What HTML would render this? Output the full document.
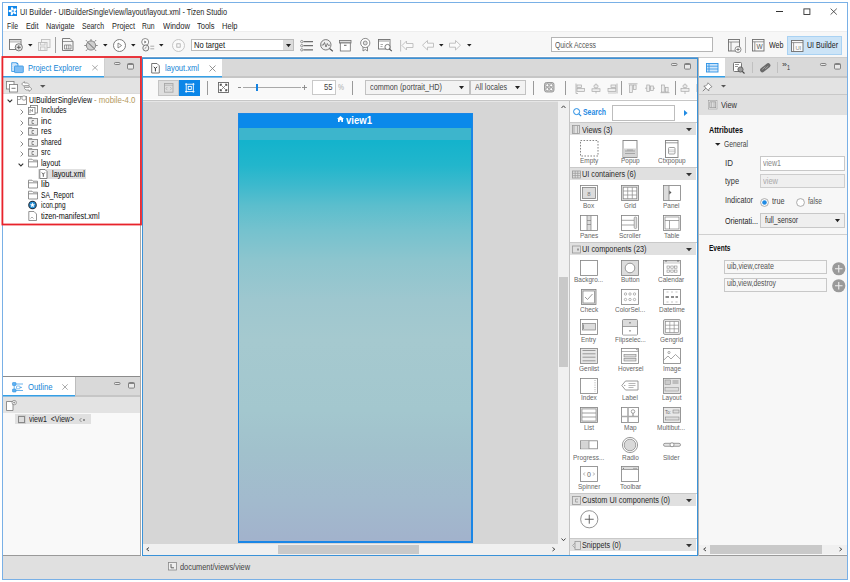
<!DOCTYPE html>
<html><head><meta charset="utf-8"><style>
html,body{margin:0;padding:0;}
body{width:850px;height:582px;position:relative;overflow:hidden;background:#fff;font-family:"Liberation Sans", sans-serif;}
svg{overflow:visible;}
</style></head><body>
<div style="position:absolute;left:0px;top:0px;width:850.00px;height:582.00px;background:#ffffff;"></div>
<div style="position:absolute;left:2px;top:2px;width:846.00px;height:578.00px;box-sizing:border-box;border:1px solid #79b0e6;background:transparent;"></div>
<div style="position:absolute;left:3px;top:31px;width:844.00px;height:26.00px;background:#f7f7f7;"></div>
<div style="position:absolute;left:3px;top:31px;width:844.00px;height:1.00px;background:#eeeeee;"></div>
<div style="position:absolute;left:7.6px;top:6.3px;width:9.40px;height:9.70px;background:#0f86ea;"></div>
<svg style="position:absolute;left:7.6px;top:6.3px;" width="9.4" height="9.7" viewBox="0 0 9.4 9.7"><g transform="translate(4.85 5.15)"><ellipse cx="0" cy="-2.4" rx="1.25" ry="1.9" fill="#fff" transform="rotate(-15)"/><ellipse cx="0" cy="-2.4" rx="1.25" ry="1.9" fill="#fff" transform="rotate(57)"/><ellipse cx="0" cy="-2.4" rx="1.25" ry="1.9" fill="#fff" transform="rotate(129)"/><ellipse cx="0" cy="-2.4" rx="1.25" ry="1.9" fill="#fff" transform="rotate(201)"/><ellipse cx="0" cy="-2.4" rx="1.25" ry="1.9" fill="#fff" transform="rotate(273)"/><circle r="1.1" fill="#5fb0f2"/></g></svg>
<div style="position:absolute;left:20px;top:8.00px;font-size:8.36px;line-height:1;font-weight:normal;color:#262626;white-space:pre;transform:scaleX(0.8723);transform-origin:0 0;">UI Builder - UIBuilderSingleView/layout/layout.xml - Tizen Studio</div>
<div style="position:absolute;left:776px;top:10.6px;width:7.00px;height:0.80px;background:#333;"></div>
<svg style="position:absolute;left:802.5px;top:8px;" width="8" height="7" viewBox="0 0 8 7"><rect x="0.9" y="0.9" width="6" height="5.6" fill="none" stroke="#333" stroke-width="0.9"/></svg>
<svg style="position:absolute;left:829.5px;top:8px;" width="8" height="7" viewBox="0 0 8 7"><path d="M0.6 0.6 L6.8 6.6 M6.8 0.6 L0.6 6.6" stroke="#333" stroke-width="0.8"/></svg>
<div style="position:absolute;left:7px;top:22.00px;font-size:8.58px;line-height:1;font-weight:normal;color:#262626;white-space:pre;transform:scaleX(0.7955);transform-origin:0 0;">File</div>
<div style="position:absolute;left:26px;top:22.00px;font-size:8.58px;line-height:1;font-weight:normal;color:#262626;white-space:pre;transform:scaleX(0.8448);transform-origin:0 0;">Edit</div>
<div style="position:absolute;left:46px;top:22.00px;font-size:8.58px;line-height:1;font-weight:normal;color:#262626;white-space:pre;transform:scaleX(0.8417);transform-origin:0 0;">Navigate</div>
<div style="position:absolute;left:82px;top:22.00px;font-size:8.58px;line-height:1;font-weight:normal;color:#262626;white-space:pre;transform:scaleX(0.8092);transform-origin:0 0;">Search</div>
<div style="position:absolute;left:111.5px;top:22.00px;font-size:8.58px;line-height:1;font-weight:normal;color:#262626;white-space:pre;transform:scaleX(0.8613);transform-origin:0 0;">Project</div>
<div style="position:absolute;left:142px;top:22.00px;font-size:8.58px;line-height:1;font-weight:normal;color:#262626;white-space:pre;transform:scaleX(0.7937);transform-origin:0 0;">Run</div>
<div style="position:absolute;left:162.7px;top:22.00px;font-size:8.58px;line-height:1;font-weight:normal;color:#262626;white-space:pre;transform:scaleX(0.8848);transform-origin:0 0;">Window</div>
<div style="position:absolute;left:196.5px;top:22.00px;font-size:8.58px;line-height:1;font-weight:normal;color:#262626;white-space:pre;transform:scaleX(0.8736);transform-origin:0 0;">Tools</div>
<div style="position:absolute;left:221.5px;top:22.00px;font-size:8.58px;line-height:1;font-weight:normal;color:#262626;white-space:pre;transform:scaleX(0.8779);transform-origin:0 0;">Help</div>
<div style="position:absolute;left:3px;top:57px;width:138.00px;height:19.00px;background:#d9d9d9;"></div>
<div style="position:absolute;left:3px;top:76px;width:138.00px;height:2.00px;background:#c6c6c6;"></div>
<div style="position:absolute;left:3px;top:57px;width:101.00px;height:19.00px;background:#ffffff;"></div>
<div style="position:absolute;left:104px;top:59px;width:1.00px;height:17.00px;background:#cfcfcf;"></div>
<div style="position:absolute;left:3px;top:76px;width:101.00px;height:1.00px;background:#35a0e6;"></div>
<div style="position:absolute;left:3px;top:77px;width:101.00px;height:1.00px;background:#88bde3;"></div>
<div style="position:absolute;left:3px;top:78px;width:138.00px;height:16.00px;background:#e3e3e3;"></div>
<div style="position:absolute;left:3px;top:93px;width:138.00px;height:1.00px;background:#dadada;"></div>
<div style="position:absolute;left:3px;top:94px;width:138.00px;height:282.00px;background:#ffffff;"></div>
<div style="position:absolute;left:3px;top:376px;width:138.00px;height:1.00px;background:#8c8c8c;"></div>
<div style="position:absolute;left:140px;top:57px;width:1.00px;height:499.00px;background:#a9a9a9;"></div>
<div style="position:absolute;left:3px;top:377px;width:137.00px;height:18.00px;background:#d9d9d9;"></div>
<div style="position:absolute;left:3px;top:395px;width:137.00px;height:2.00px;background:#c6c6c6;"></div>
<div style="position:absolute;left:3px;top:377px;width:72.00px;height:18.00px;background:#ffffff;"></div>
<div style="position:absolute;left:75px;top:377px;width:1.00px;height:18.00px;background:#bdbdbd;"></div>
<div style="position:absolute;left:3px;top:395px;width:72.00px;height:1.00px;background:#35a0e6;"></div>
<div style="position:absolute;left:3px;top:396px;width:72.00px;height:1.00px;background:#88bde3;"></div>
<div style="position:absolute;left:3px;top:397px;width:137.00px;height:16.00px;background:#e3e3e3;"></div>
<div style="position:absolute;left:3px;top:413px;width:137.00px;height:142.00px;background:#f9f9f9;"></div>
<div style="position:absolute;left:3px;top:555px;width:138.00px;height:1.00px;background:#9a9a9a;"></div>
<div style="position:absolute;left:142px;top:57px;width:556.00px;height:499.00px;background:#d6d6d6;"></div>
<div style="position:absolute;left:142px;top:56px;width:556.00px;height:1.00px;background:#ffffff;"></div>
<div style="position:absolute;left:142px;top:57px;width:556.00px;height:1.00px;background:#6d9fcc;"></div>
<div style="position:absolute;left:142px;top:58px;width:556.00px;height:497.50px;box-sizing:border-box;border:1px solid #3a92d8;background:transparent;"></div>
<div style="position:absolute;left:143px;top:59px;width:554.00px;height:17.00px;background:#d9d9d9;"></div>
<div style="position:absolute;left:143px;top:76px;width:554.00px;height:2.00px;background:#c6c6c6;"></div>
<div style="position:absolute;left:143px;top:59px;width:79.00px;height:17.00px;background:#ffffff;"></div>
<div style="position:absolute;left:143px;top:76px;width:79.00px;height:1.00px;background:#35a0e6;"></div>
<div style="position:absolute;left:143px;top:77px;width:79.00px;height:1.00px;background:#88bde3;"></div>
<div style="position:absolute;left:143px;top:78px;width:554.00px;height:21.00px;background:#f9f9f9;"></div>
<div style="position:absolute;left:143px;top:99px;width:554.00px;height:1.00px;background:#ffffff;"></div>
<div style="position:absolute;left:143px;top:100px;width:554.00px;height:1.00px;background:#c6c6c6;"></div>
<div style="position:absolute;left:143px;top:101px;width:415.00px;height:1.00px;background:#e6e6e6;"></div>
<div style="position:absolute;left:143px;top:544px;width:426.00px;height:11.00px;background:#f0f0f0;"></div>
<div style="position:absolute;left:278px;top:545px;width:141.00px;height:9.00px;background:#c9c9c9;"></div>
<div style="position:absolute;left:558px;top:101px;width:11.00px;height:454.00px;background:#f0f0f0;"></div>
<div style="position:absolute;left:559px;top:277px;width:9.00px;height:90.00px;background:#c9c9c9;"></div>
<div style="position:absolute;left:569px;top:101px;width:1.00px;height:454.00px;background:#c4c4c4;"></div>
<div style="position:absolute;left:570px;top:101px;width:127.00px;height:454.00px;background:#ffffff;"></div>
<div style="position:absolute;left:698px;top:57px;width:149.00px;height:499.00px;background:#f7f7f7;"></div>
<div style="position:absolute;left:698px;top:57px;width:149.00px;height:1.00px;background:#cccccc;"></div>
<div style="position:absolute;left:698px;top:58px;width:149.00px;height:18.00px;background:#d9d9d9;"></div>
<div style="position:absolute;left:698px;top:76px;width:149.00px;height:2.00px;background:#c6c6c6;"></div>
<div style="position:absolute;left:699px;top:58px;width:26.00px;height:18.00px;background:#ffffff;"></div>
<div style="position:absolute;left:699px;top:76px;width:26.00px;height:1.00px;background:#35a0e6;"></div>
<div style="position:absolute;left:699px;top:77px;width:26.00px;height:1.00px;background:#88bde3;"></div>
<div style="position:absolute;left:698px;top:78px;width:149.00px;height:16.00px;background:#e3e3e3;"></div>
<div style="position:absolute;left:698px;top:94px;width:149.00px;height:1.00px;background:#c8c8c8;"></div>
<div style="position:absolute;left:698px;top:95px;width:149.00px;height:20.00px;background:#e0e0e0;"></div>
<div style="position:absolute;left:698px;top:545px;width:149.00px;height:9.00px;background:#f0f0f0;"></div>
<div style="position:absolute;left:710px;top:545px;width:112.00px;height:9.00px;background:#c9c9c9;"></div>
<div style="position:absolute;left:698px;top:555px;width:149.00px;height:1.00px;background:#9a9a9a;"></div>
<div style="position:absolute;left:698px;top:57px;width:1.00px;height:499.00px;background:#b5b5b5;"></div>
<div style="position:absolute;left:3px;top:556px;width:844.00px;height:23.00px;background:#e0e0e0;"></div>
<div style="position:absolute;left:237.5px;top:112.7px;width:235.10px;height:430.00px;background:#1a86e6;"></div>
<div style="position:absolute;left:239.2px;top:127.5px;width:231.80px;height:413.80px;background:linear-gradient(180deg,#14b3cc 13.5px,#22b6cc 37.5px,#3db9cd 57.5px,#5bbecd 77.5px,#75c2ce 102.5px,#8dc5ce 132.5px,#9ec7cf 172.5px,#a5c9cf 212.5px,#a3c7ce 282.5px,#a1c1cc 322.5px,#a2bacd 372.5px,#a2b2cc 413.8px);"></div>
<div style="position:absolute;left:239.2px;top:127.5px;width:231.80px;height:12.80px;background:#3db5cc;"></div>
<div style="position:absolute;left:238.5px;top:113.5px;width:233.30px;height:14.00px;background:#0a89ea;"></div>
<svg style="position:absolute;left:337px;top:115.6px;" width="7" height="6" viewBox="0 0 7 6"><path d="M3.5 0 L7 3 L6 3 L6 6 L4.3 6 L4.3 4.2 L2.7 4.2 L2.7 6 L1 6 L1 3 L0 3 Z" fill="#fff"/></svg>
<div style="position:absolute;left:345.6px;top:116.00px;font-size:10.34px;line-height:1;font-weight:bold;color:#fff;white-space:pre;transform:scaleX(0.9239);transform-origin:0 0;">view1</div>
<div style="position:absolute;left:165px;top:64.00px;font-size:9.24px;line-height:1;font-weight:normal;color:#1485d6;white-space:pre;transform:scaleX(0.8177);transform-origin:0 0;">layout.xml</div>
<svg style="position:absolute;left:208.5px;top:64.5px;" width="7" height="7" viewBox="0 0 7 7"><path d="M0.5 0.5 L6.5 6.5 M6.5 0.5 L0.5 6.5" stroke="#7a7a7a" stroke-width="0.8"/></svg>
<svg style="position:absolute;left:671px;top:62.5px;" width="6.5" height="3" viewBox="0 0 6.5 3"><rect x="0.5" y="0.5" width="5.5" height="2" rx="0.8" fill="#e8e8e8" stroke="#777" stroke-width="0.9"/></svg>
<svg style="position:absolute;left:684.4px;top:62.8px;" width="7" height="6.5" viewBox="0 0 7 6.5"><rect x="0.5" y="0.5" width="6" height="5.6" rx="1" fill="#e8e8e8" stroke="#777" stroke-width="0.9"/><path d="M0.8 1.4 H6.2" stroke="#777" stroke-width="1"/></svg>
<svg style="position:absolute;left:572.5px;top:107.5px;" width="9" height="9" viewBox="0 0 9 9"><circle cx="3.6" cy="3.6" r="3" fill="none" stroke="#1f8ae3" stroke-width="1"/><path d="M5.8 5.8 L8.2 8.2" stroke="#1f8ae3" stroke-width="1.1"/></svg>
<div style="position:absolute;left:583px;top:108.00px;font-size:8.58px;line-height:1;font-weight:bold;color:#1f8ae3;white-space:pre;transform:scaleX(0.8035);transform-origin:0 0;">Search</div>
<div style="position:absolute;left:612px;top:104.5px;width:63.20px;height:16.00px;box-sizing:border-box;border:1px solid #bdbdbd;background:#fff;"></div>
<svg style="position:absolute;left:684px;top:109.5px;" width="4" height="6" viewBox="0 0 4 6"><path d="M0 0 L3.6 3 L0 6 Z" fill="#1f8ae3"/></svg>
<div style="position:absolute;left:570.2px;top:122.2px;width:127.30px;height:1.00px;background:#c9c9c9;"></div>
<div style="position:absolute;left:570.2px;top:123.2px;width:126.00px;height:12.30px;background:#e0e0e0;"></div>
<svg style="position:absolute;left:572px;top:125.2px;opacity:0.75;" width="9" height="9" viewBox="0 0 9 9"><rect x="0.5" y="0.5" width="7" height="8" fill="none" stroke="#808080" stroke-width="0.8" /><path d="M2 1 V8.5 M5.5 1 V8.5" stroke="#808080" stroke-width="0.7"/></svg>
<div style="position:absolute;left:582.3px;top:126.00px;font-size:8.58px;line-height:1;font-weight:normal;color:#2a2a2a;white-space:pre;transform:scaleX(0.8565);transform-origin:0 0;">Views (3)</div>
<svg style="position:absolute;left:686px;top:128.35px;" width="6" height="3.5" viewBox="0 0 6 3.5"><path d="M0 0 L6 0 L3 3.3 Z" fill="#333"/></svg>
<div style="position:absolute;left:570.2px;top:167.2px;width:127.30px;height:1.00px;background:#c9c9c9;"></div>
<div style="position:absolute;left:570.2px;top:168.2px;width:126.00px;height:12.20px;background:#e0e0e0;"></div>
<svg style="position:absolute;left:572px;top:170.2px;opacity:0.75;" width="9" height="9" viewBox="0 0 9 9"><rect x="0.5" y="1" width="8" height="7" fill="none" stroke="#808080" stroke-width="0.8" /><path d="M0.5 3.3 H8.5 M0.5 5.6 H8.5 M3.2 1 V8 M5.8 1 V8" stroke="#808080" stroke-width="0.7"/></svg>
<div style="position:absolute;left:582.3px;top:170.00px;font-size:8.58px;line-height:1;font-weight:normal;color:#2a2a2a;white-space:pre;transform:scaleX(0.8517);transform-origin:0 0;">UI containers (6)</div>
<svg style="position:absolute;left:686px;top:173.29999999999998px;" width="6" height="3.5" viewBox="0 0 6 3.5"><path d="M0 0 L6 0 L3 3.3 Z" fill="#333"/></svg>
<div style="position:absolute;left:570.2px;top:241.89999999999998px;width:127.30px;height:1.00px;background:#c9c9c9;"></div>
<div style="position:absolute;left:570.2px;top:242.89999999999998px;width:126.00px;height:11.70px;background:#e0e0e0;"></div>
<svg style="position:absolute;left:572px;top:244.89999999999998px;opacity:0.75;" width="9" height="9" viewBox="0 0 9 9"><rect x="0.5" y="1" width="8" height="7" fill="none" stroke="#808080" stroke-width="0.8" /><rect x="5" y="3.5" width="2" height="2" fill="#808080"/></svg>
<div style="position:absolute;left:582.3px;top:245.00px;font-size:8.58px;line-height:1;font-weight:normal;color:#2a2a2a;white-space:pre;transform:scaleX(0.8561);transform-origin:0 0;">UI components (23)</div>
<svg style="position:absolute;left:686px;top:247.74999999999997px;" width="6" height="3.5" viewBox="0 0 6 3.5"><path d="M0 0 L6 0 L3 3.3 Z" fill="#333"/></svg>
<div style="position:absolute;left:570.2px;top:493.2px;width:127.30px;height:1.00px;background:#c9c9c9;"></div>
<div style="position:absolute;left:570.2px;top:494.2px;width:126.00px;height:11.80px;background:#e0e0e0;"></div>
<svg style="position:absolute;left:572px;top:496.2px;opacity:0.75;" width="9" height="9" viewBox="0 0 9 9"><rect x="0.5" y="0.5" width="8" height="8" fill="none" stroke="#808080" stroke-width="0.8" /><path d="M6 3 H3.5 V6 H6" fill="none" stroke="#808080" stroke-width="0.8"/></svg>
<div style="position:absolute;left:582.3px;top:496.00px;font-size:8.58px;line-height:1;font-weight:normal;color:#2a2a2a;white-space:pre;transform:scaleX(0.8585);transform-origin:0 0;">Custom UI components (0)</div>
<svg style="position:absolute;left:686px;top:499.1px;" width="6" height="3.5" viewBox="0 0 6 3.5"><path d="M0 0 L6 0 L3 3.3 Z" fill="#333"/></svg>
<div style="position:absolute;left:570.2px;top:538.2px;width:127.30px;height:1.00px;background:#c9c9c9;"></div>
<div style="position:absolute;left:570.2px;top:539.2px;width:126.00px;height:11.80px;background:#e0e0e0;"></div>
<svg style="position:absolute;left:572px;top:541.2px;opacity:0.75;" width="9" height="9" viewBox="0 0 9 9"><path d="M3 2 L0.5 4.5 L3 7" fill="none" stroke="#888" stroke-width="0.8"/><rect x="3" y="0.5" width="5.5" height="8" fill="none" stroke="#808080" stroke-width="0.8" /></svg>
<div style="position:absolute;left:582.3px;top:541.00px;font-size:8.58px;line-height:1;font-weight:normal;color:#2a2a2a;white-space:pre;transform:scaleX(0.8432);transform-origin:0 0;">Snippets (0)</div>
<svg style="position:absolute;left:686px;top:544.1px;" width="6" height="3.5" viewBox="0 0 6 3.5"><path d="M0 0 L6 0 L3 3.3 Z" fill="#333"/></svg>
<svg style="position:absolute;left:580px;top:139.5px;" width="18" height="16" viewBox="0 0 18 16"><rect x="0.5" y="0.5" width="17.5" height="15.5" fill="none" stroke="#777" stroke-width="0.9" stroke-dasharray="1.6 1.4"/></svg>
<div style="position:absolute;left:579.83px;top:157.00px;font-size:7.92px;line-height:1;font-weight:normal;color:#666666;white-space:pre;transform:scaleX(0.8182);transform-origin:0 0;">Empty</div>
<svg style="position:absolute;left:621.3px;top:139.5px;" width="18" height="16" viewBox="0 0 18 16"><rect x="2" y="0.5" width="14" height="17" fill="#fff" stroke="#808080" stroke-width="0.9"/><rect x="2.4" y="8.5" width="13.2" height="8.6" fill="#d5d5d5"/><path d="M4 11 H14 M6 10 H12 M4 13.5 H14" stroke="#999" stroke-width="0.8"/></svg>
<div style="position:absolute;left:620.94px;top:157.00px;font-size:7.92px;line-height:1;font-weight:normal;color:#666666;white-space:pre;transform:scaleX(0.8182);transform-origin:0 0;">Popup</div>
<svg style="position:absolute;left:662.5px;top:139.5px;" width="18" height="16" viewBox="0 0 18 16"><rect x="2.5" y="0.5" width="12.5" height="17" fill="#fff" stroke="#808080" stroke-width="0.9"/><path d="M2.5 2.8 H15" stroke="#808080" stroke-width="0.8"/><rect x="5.5" y="7.5" width="6.5" height="6.5" rx="1" fill="none" stroke="#888" stroke-width="0.8"/><path d="M5.5 10 H12 M5.5 11.7 H12" stroke="#aaa" stroke-width="0.6"/></svg>
<div style="position:absolute;left:657.65px;top:157.00px;font-size:7.92px;line-height:1;font-weight:normal;color:#666666;white-space:pre;transform:scaleX(0.8182);transform-origin:0 0;">Ctxpopup</div>
<svg style="position:absolute;left:580px;top:185.2px;" width="18" height="16" viewBox="0 0 18 16"><rect x="0.5" y="0.5" width="17" height="15" fill="none" stroke="#808080" stroke-width="0.8" /><rect x="2.5" y="2.5" width="13" height="11" fill="#dcdcdc" stroke="#808080" stroke-width="0.8"/><text x="9" y="10.5" font-size="6" text-anchor="middle" fill="#777" font-family="Liberation Sans">8</text></svg>
<div style="position:absolute;left:583.43px;top:202.00px;font-size:7.92px;line-height:1;font-weight:normal;color:#666666;white-space:pre;transform:scaleX(0.8182);transform-origin:0 0;">Box</div>
<svg style="position:absolute;left:621.3px;top:185.2px;" width="18" height="16" viewBox="0 0 18 16"><rect x="0.5" y="0.5" width="17" height="15" fill="#e0e0e0" stroke="#808080" stroke-width="0.8"/><rect x="2.2" y="2.2" width="13.6" height="11.6" fill="#fff" stroke="#808080" stroke-width="0.7"/><path d="M2.2 6 H15.8 M2.2 10 H15.8 M6.7 2.2 V13.8 M11.3 2.2 V13.8" stroke="#8a8a8a" stroke-width="0.7"/></svg>
<div style="position:absolute;left:624.19px;top:202.00px;font-size:7.92px;line-height:1;font-weight:normal;color:#666666;white-space:pre;transform:scaleX(0.8182);transform-origin:0 0;">Grid</div>
<svg style="position:absolute;left:662.5px;top:185.2px;" width="18" height="16" viewBox="0 0 18 16"><rect x="0.5" y="0.5" width="17" height="15" fill="none" stroke="#808080" stroke-width="0.8" /><rect x="1" y="1" width="5" height="14" fill="#dcdcdc"/><path d="M6 0.5 V15.5" stroke="#808080" stroke-width="0.8"/><path d="M6.3 5.5 L8.5 7.5 L6.3 9.5 Z" fill="#555"/></svg>
<div style="position:absolute;left:663.22px;top:202.00px;font-size:7.92px;line-height:1;font-weight:normal;color:#666666;white-space:pre;transform:scaleX(0.8182);transform-origin:0 0;">Panel</div>
<svg style="position:absolute;left:580px;top:214.9px;" width="18" height="16" viewBox="0 0 18 16"><rect x="0.5" y="0.5" width="17" height="15" fill="none" stroke="#808080" stroke-width="0.8" /><rect x="7" y="1" width="4" height="14" fill="#dcdcdc"/><path d="M7 0.5 V15.5 M11 0.5 V15.5 M7 5.5 H11 M7 9.5 H11" stroke="#808080" stroke-width="0.7"/></svg>
<div style="position:absolute;left:579.83px;top:232.00px;font-size:7.92px;line-height:1;font-weight:normal;color:#666666;white-space:pre;transform:scaleX(0.8182);transform-origin:0 0;">Panes</div>
<svg style="position:absolute;left:621.3px;top:214.9px;" width="18" height="16" viewBox="0 0 18 16"><rect x="0.5" y="0.5" width="17" height="15" fill="none" stroke="#808080" stroke-width="0.8" /><path d="M0.5 5.3 H13 M0.5 10 H13" stroke="#808080" stroke-width="0.7"/><rect x="13.2" y="2" width="2.5" height="11.5" rx="1" fill="#ddd" stroke="#808080" stroke-width="0.6"/></svg>
<div style="position:absolute;left:619.33px;top:232.00px;font-size:7.92px;line-height:1;font-weight:normal;color:#666666;white-space:pre;transform:scaleX(0.8182);transform-origin:0 0;">Scroller</div>
<svg style="position:absolute;left:662.5px;top:214.9px;" width="18" height="16" viewBox="0 0 18 16"><rect x="0.5" y="0.5" width="17" height="15" fill="none" stroke="#808080" stroke-width="0.8" /><rect x="2" y="2" width="14" height="12" fill="none" stroke="#808080" stroke-width="0.7"/><path d="M2 5.5 H16 M6.5 5.5 V14" stroke="#808080" stroke-width="0.7"/></svg>
<div style="position:absolute;left:663.77px;top:232.00px;font-size:7.92px;line-height:1;font-weight:normal;color:#666666;white-space:pre;transform:scaleX(0.8182);transform-origin:0 0;">Table</div>
<svg style="position:absolute;left:580px;top:259.7px;" width="18" height="16" viewBox="0 0 18 16"><rect x="0.5" y="0.5" width="17" height="15" fill="none" stroke="#808080" stroke-width="0.8" /></svg>
<div style="position:absolute;left:574.44px;top:276.00px;font-size:7.92px;line-height:1;font-weight:normal;color:#666666;white-space:pre;transform:scaleX(0.8182);transform-origin:0 0;">Backgro...</div>
<svg style="position:absolute;left:621.3px;top:259.7px;" width="18" height="16" viewBox="0 0 18 16"><rect x="0.5" y="0.5" width="17" height="15" fill="#dcdcdc" stroke="#808080" stroke-width="0.8"/><circle cx="9" cy="8" r="4.8" fill="#fff" stroke="#808080" stroke-width="0.8"/></svg>
<div style="position:absolute;left:620.95px;top:276.00px;font-size:7.92px;line-height:1;font-weight:normal;color:#666666;white-space:pre;transform:scaleX(0.8182);transform-origin:0 0;">Button</div>
<svg style="position:absolute;left:662.5px;top:259.7px;" width="18" height="16" viewBox="0 0 18 16"><rect x="0.5" y="0.5" width="17" height="15" fill="none" stroke="#808080" stroke-width="0.8" /><rect x="1" y="1" width="16" height="2.8" fill="#ddd"/><circle cx="3" cy="1" r="0.8" fill="#666"/><circle cx="15" cy="1" r="0.8" fill="#666"/><rect x="4" y="6" width="2.4" height="2.2" fill="none" stroke="#888" stroke-width="0.6"/><rect x="4" y="10" width="2.4" height="2.2" fill="none" stroke="#888" stroke-width="0.6"/><rect x="7.8" y="6" width="2.4" height="2.2" fill="none" stroke="#888" stroke-width="0.6"/><rect x="7.8" y="10" width="2.4" height="2.2" fill="none" stroke="#888" stroke-width="0.6"/><rect x="11.6" y="6" width="2.4" height="2.2" fill="none" stroke="#888" stroke-width="0.6"/><rect x="11.6" y="10" width="2.4" height="2.2" fill="none" stroke="#888" stroke-width="0.6"/></svg>
<div style="position:absolute;left:658.37px;top:276.00px;font-size:7.92px;line-height:1;font-weight:normal;color:#666666;white-space:pre;transform:scaleX(0.8182);transform-origin:0 0;">Calendar</div>
<svg style="position:absolute;left:580px;top:289.2px;" width="18" height="16" viewBox="0 0 18 16"><rect x="1.5" y="0.5" width="14.5" height="15" fill="#ddd" stroke="#808080" stroke-width="0.8"/><rect x="3" y="2" width="11.5" height="12" fill="#fff" stroke="#808080" stroke-width="0.7"/><path d="M5 8 L7.5 10.5 L12.5 5" fill="none" stroke="#808080" stroke-width="0.8"/></svg>
<div style="position:absolute;left:579.83px;top:306.00px;font-size:7.92px;line-height:1;font-weight:normal;color:#666666;white-space:pre;transform:scaleX(0.8182);transform-origin:0 0;">Check</div>
<svg style="position:absolute;left:621.3px;top:289.2px;" width="18" height="16" viewBox="0 0 18 16"><rect x="0.5" y="0.5" width="17" height="15" fill="none" stroke="#808080" stroke-width="0.8" /><circle cx="4.5" cy="5" r="1.2" fill="none" stroke="#888" stroke-width="0.6"/><circle cx="4.5" cy="10.5" r="1.2" fill="none" stroke="#888" stroke-width="0.6"/><circle cx="9" cy="5" r="1.2" fill="none" stroke="#888" stroke-width="0.6"/><circle cx="9" cy="10.5" r="1.2" fill="none" stroke="#888" stroke-width="0.6"/><circle cx="13.5" cy="5" r="1.2" fill="none" stroke="#888" stroke-width="0.6"/><circle cx="13.5" cy="10.5" r="1.2" fill="none" stroke="#888" stroke-width="0.6"/></svg>
<div style="position:absolute;left:615.2px;top:306.00px;font-size:7.92px;line-height:1;font-weight:normal;color:#666666;white-space:pre;transform:scaleX(0.8182);transform-origin:0 0;">ColorSel...</div>
<svg style="position:absolute;left:662.5px;top:289.2px;" width="18" height="16" viewBox="0 0 18 16"><rect x="0.5" y="0.5" width="17" height="15" fill="none" stroke="#808080" stroke-width="0.8" /><path d="M3.5 3 H5.5 M8 3 H10 M12.5 3 H14.5 M3.5 13 H5.5 M8 13 H10 M12.5 13 H14.5" stroke="#999" stroke-width="0.6"/><path d="M2.5 8 H6 M8 8 H11 M12.5 8 H15" stroke="#666" stroke-width="1.6"/></svg>
<div style="position:absolute;left:658.56px;top:306.00px;font-size:7.92px;line-height:1;font-weight:normal;color:#666666;white-space:pre;transform:scaleX(0.8182);transform-origin:0 0;">Datetime</div>
<svg style="position:absolute;left:580px;top:318.7px;" width="18" height="16" viewBox="0 0 18 16"><rect x="0.5" y="0.5" width="17" height="15" fill="none" stroke="#808080" stroke-width="0.8" /><rect x="2.5" y="4.5" width="13" height="6.5" fill="#ddd" stroke="#808080" stroke-width="0.7"/><path d="M3.5 5.5 V10" stroke="#666" stroke-width="0.6"/></svg>
<div style="position:absolute;left:581.45px;top:336.00px;font-size:7.92px;line-height:1;font-weight:normal;color:#666666;white-space:pre;transform:scaleX(0.8182);transform-origin:0 0;">Entry</div>
<svg style="position:absolute;left:621.3px;top:318.7px;" width="18" height="16" viewBox="0 0 18 16"><rect x="1.5" y="0.5" width="15" height="15.5" rx="1" fill="#dcdcdc" stroke="#808080" stroke-width="0.8"/><rect x="2" y="7.5" width="14" height="8" fill="#fff"/><path d="M1.5 7.5 H16.5" stroke="#808080" stroke-width="0.7"/><path d="M7.8 4.3 L9 3 L10.2 4.3 Z M7.8 11.5 L9 12.8 L10.2 11.5 Z" fill="#555"/></svg>
<div style="position:absolute;left:614.84px;top:336.00px;font-size:7.92px;line-height:1;font-weight:normal;color:#666666;white-space:pre;transform:scaleX(0.8182);transform-origin:0 0;">Flipselec...</div>
<svg style="position:absolute;left:662.5px;top:318.7px;" width="18" height="16" viewBox="0 0 18 16"><rect x="0.5" y="0.5" width="17" height="15" rx="1.5" fill="#e3e3e3" stroke="#8a8a8a" stroke-width="0.8"/><rect x="2.5" y="2.5" width="13" height="11" fill="#fff" stroke="#808080" stroke-width="0.6"/><path d="M2.5 6.2 H15.5 M2.5 9.8 H15.5 M6.8 2.5 V13.5 M11.2 2.5 V13.5" stroke="#808080" stroke-width="0.6"/></svg>
<div style="position:absolute;left:659.99px;top:336.00px;font-size:7.92px;line-height:1;font-weight:normal;color:#666666;white-space:pre;transform:scaleX(0.8182);transform-origin:0 0;">Gengrid</div>
<svg style="position:absolute;left:580px;top:348.2px;" width="18" height="16" viewBox="0 0 18 16"><rect x="0.5" y="0.5" width="17" height="15" fill="#e6e6e6" stroke="#808080" stroke-width="0.8"/><path d="M2.5 2.5 H15.5 M2.5 5.8 H15.5 M2.5 9.2 H15.5 M2.5 12.8 H15.5" stroke="#777" stroke-width="0.7"/></svg>
<div style="position:absolute;left:578.93px;top:365.00px;font-size:7.92px;line-height:1;font-weight:normal;color:#666666;white-space:pre;transform:scaleX(0.8182);transform-origin:0 0;">Genlist</div>
<svg style="position:absolute;left:621.3px;top:348.2px;" width="18" height="16" viewBox="0 0 18 16"><rect x="0.5" y="0.5" width="17" height="15" fill="none" stroke="#808080" stroke-width="0.8" /><path d="M0.5 3.5 H17.5" stroke="#808080" stroke-width="0.6"/><rect x="3" y="6.5" width="12" height="2.5" fill="#ddd" stroke="#808080" stroke-width="0.6"/><rect x="3" y="10.5" width="12" height="2.5" fill="#ddd" stroke="#808080" stroke-width="0.6"/><path d="M15 1.2 L16.5 1.2 L16.5 2.7 Z" fill="#555"/></svg>
<div style="position:absolute;left:617.54px;top:365.00px;font-size:7.92px;line-height:1;font-weight:normal;color:#666666;white-space:pre;transform:scaleX(0.8182);transform-origin:0 0;">Hoversel</div>
<svg style="position:absolute;left:662.5px;top:348.2px;" width="18" height="16" viewBox="0 0 18 16"><rect x="0.5" y="0.5" width="17" height="15" fill="none" stroke="#808080" stroke-width="0.8" /><path d="M0.8 12 L5 8 L8 11 L12.5 6.5 L17.2 11" fill="none" stroke="#808080" stroke-width="0.7"/><circle cx="6" cy="4.5" r="1.1" fill="none" stroke="#777" stroke-width="0.6"/></svg>
<div style="position:absolute;left:662.51px;top:365.00px;font-size:7.92px;line-height:1;font-weight:normal;color:#666666;white-space:pre;transform:scaleX(0.8182);transform-origin:0 0;">Image</div>
<svg style="position:absolute;left:580px;top:377.7px;" width="18" height="16" viewBox="0 0 18 16"><rect x="0.5" y="0.5" width="17" height="15" fill="none" stroke="#808080" stroke-width="0.8" /><path d="M15 2 V14" stroke="#888" stroke-width="0.7" stroke-dasharray="1 1.3"/></svg>
<div style="position:absolute;left:581.09px;top:394.00px;font-size:7.92px;line-height:1;font-weight:normal;color:#666666;white-space:pre;transform:scaleX(0.8182);transform-origin:0 0;">Index</div>
<svg style="position:absolute;left:621.3px;top:377.7px;" width="18" height="16" viewBox="0 0 18 16"><path d="M4.5 3 H17 V12 H4.5 L0.8 7.5 Z" fill="none" stroke="#808080" stroke-width="0.8"/><path d="M7.5 5.5 H14.5 M7.5 7.5 H14.5 M7.5 9.5 H12.5" stroke="#888" stroke-width="0.6"/><circle cx="3.8" cy="7.5" r="0.5" fill="#666"/></svg>
<div style="position:absolute;left:622.38px;top:394.00px;font-size:7.92px;line-height:1;font-weight:normal;color:#666666;white-space:pre;transform:scaleX(0.8182);transform-origin:0 0;">Label</div>
<svg style="position:absolute;left:662.5px;top:377.7px;" width="18" height="16" viewBox="0 0 18 16"><rect x="0.5" y="0.5" width="17" height="15" fill="#e3e3e3" stroke="#808080" stroke-width="0.8"/><rect x="2" y="2" width="5.5" height="4.5" fill="#ccc" stroke="#888" stroke-width="0.5"/><path d="M9.5 3 H15.5 M9.5 5 H15.5" stroke="#777" stroke-width="0.7"/><rect x="2" y="9.5" width="13.5" height="3.5" fill="#ddd" stroke="#888" stroke-width="0.5"/></svg>
<div style="position:absolute;left:661.78px;top:394.00px;font-size:7.92px;line-height:1;font-weight:normal;color:#666666;white-space:pre;transform:scaleX(0.8182);transform-origin:0 0;">Layout</div>
<svg style="position:absolute;left:580px;top:407.2px;" width="18" height="16" viewBox="0 0 18 16"><rect x="0.5" y="0.5" width="17" height="15" fill="#ddd" stroke="#808080" stroke-width="0.8"/><rect x="2" y="2" width="14" height="12" fill="#fff" stroke="#808080" stroke-width="0.6"/><path d="M2 6 H16 M2 10 H16" stroke="#888" stroke-width="0.8"/></svg>
<div style="position:absolute;left:583.96px;top:424.00px;font-size:7.92px;line-height:1;font-weight:normal;color:#666666;white-space:pre;transform:scaleX(0.8182);transform-origin:0 0;">List</div>
<svg style="position:absolute;left:621.3px;top:407.2px;" width="18" height="16" viewBox="0 0 18 16"><rect x="0.5" y="0.5" width="17" height="15" fill="none" stroke="#808080" stroke-width="0.8" /><path d="M7 0.5 V15.5 M0.5 9.5 H17.5" stroke="#aaa" stroke-width="1.6"/><circle cx="12" cy="4.5" r="1.8" fill="#fff" stroke="#808080" stroke-width="0.7"/><path d="M12 6.3 V9" stroke="#666" stroke-width="0.8"/></svg>
<div style="position:absolute;left:624.0px;top:424.00px;font-size:7.92px;line-height:1;font-weight:normal;color:#666666;white-space:pre;transform:scaleX(0.8182);transform-origin:0 0;">Map</div>
<svg style="position:absolute;left:662.5px;top:407.2px;" width="18" height="16" viewBox="0 0 18 16"><rect x="0.5" y="0.5" width="17" height="15" fill="#e9e9e9" stroke="#808080" stroke-width="0.8"/><text x="2" y="7" font-size="4.5" fill="#666" font-family="Liberation Sans">To:</text><rect x="10" y="3" width="6" height="3" fill="#ddd" stroke="#777" stroke-width="0.5"/><rect x="2.5" y="10" width="13.5" height="3" fill="#ddd" stroke="#777" stroke-width="0.5"/></svg>
<div style="position:absolute;left:657.48px;top:424.00px;font-size:7.92px;line-height:1;font-weight:normal;color:#666666;white-space:pre;transform:scaleX(0.8182);transform-origin:0 0;">Multibut...</div>
<svg style="position:absolute;left:580px;top:436.7px;" width="18" height="16" viewBox="0 0 18 16"><rect x="0.5" y="3.8" width="17" height="8" fill="#fff" stroke="#808080" stroke-width="0.8"/><rect x="1" y="4.2" width="8" height="7.2" fill="#d5d5d5"/><path d="M9 3.8 V11.8" stroke="#808080" stroke-width="0.7"/></svg>
<div style="position:absolute;left:573.36px;top:454.00px;font-size:7.92px;line-height:1;font-weight:normal;color:#666666;white-space:pre;transform:scaleX(0.8182);transform-origin:0 0;">Progress...</div>
<svg style="position:absolute;left:621.3px;top:436.7px;" width="18" height="16" viewBox="0 0 18 16"><circle cx="9" cy="8" r="7.6" fill="#fff" stroke="#808080" stroke-width="0.8"/><circle cx="9" cy="8" r="5.8" fill="#d9d9d9" stroke="#808080" stroke-width="0.7"/></svg>
<div style="position:absolute;left:621.84px;top:454.00px;font-size:7.92px;line-height:1;font-weight:normal;color:#666666;white-space:pre;transform:scaleX(0.8182);transform-origin:0 0;">Radio</div>
<svg style="position:absolute;left:662.5px;top:436.7px;" width="18" height="16" viewBox="0 0 18 16"><rect x="0.5" y="6.3" width="17" height="3" rx="1.5" fill="#e5e5e5" stroke="#777" stroke-width="0.7"/><circle cx="9" cy="7.8" r="2" fill="#fff" stroke="#777" stroke-width="0.7"/></svg>
<div style="position:absolute;left:663.23px;top:454.00px;font-size:7.92px;line-height:1;font-weight:normal;color:#666666;white-space:pre;transform:scaleX(0.8182);transform-origin:0 0;">Slider</div>
<svg style="position:absolute;left:580px;top:466.2px;" width="18" height="16" viewBox="0 0 18 16"><rect x="0.5" y="0.5" width="17" height="15" fill="none" stroke="#808080" stroke-width="0.8" /><text x="9" y="10.5" font-size="7" text-anchor="middle" fill="#666" font-family="Liberation Sans">0</text><path d="M4.8 6.5 L3.5 8 L4.8 9.5 M13.2 6.5 L14.5 8 L13.2 9.5" fill="none" stroke="#777" stroke-width="0.6"/></svg>
<div style="position:absolute;left:577.85px;top:483.00px;font-size:7.92px;line-height:1;font-weight:normal;color:#666666;white-space:pre;transform:scaleX(0.8182);transform-origin:0 0;">Spinner</div>
<svg style="position:absolute;left:621.3px;top:466.2px;" width="18" height="16" viewBox="0 0 18 16"><rect x="0.5" y="0.5" width="17" height="15" fill="none" stroke="#808080" stroke-width="0.8" /><rect x="1" y="1" width="16" height="2.5" fill="#ddd"/><path d="M0.5 3.5 H17.5" stroke="#808080" stroke-width="0.7"/><circle cx="2.5" cy="2.2" r="0.5" fill="#555"/><circle cx="13" cy="2.2" r="0.5" fill="#555"/><circle cx="15" cy="2.2" r="0.5" fill="#555"/></svg>
<div style="position:absolute;left:619.69px;top:483.00px;font-size:7.92px;line-height:1;font-weight:normal;color:#666666;white-space:pre;transform:scaleX(0.8182);transform-origin:0 0;">Toolbar</div>
<svg style="position:absolute;left:580px;top:509.6px;" width="18.5" height="18.5" viewBox="0 0 18.5 18.5"><circle cx="9.25" cy="9.25" r="8.6" fill="#fff" stroke="#888" stroke-width="0.9"/><path d="M9.25 4.8 V13.7 M4.8 9.25 H13.7" stroke="#555" stroke-width="0.9"/></svg>
<svg style="position:absolute;left:11.3px;top:62.1px;" width="12.8" height="11" viewBox="0 0 12.8 11"><path d="M0.7 0.7 H5.5 L7 2.2 V9.5 H0.7 Z" fill="#cfe6fb" stroke="#3d9be6" stroke-width="0.9" stroke-linejoin="round"/><path d="M1.7 3.5 V3.9 M1.7 5.6 V6 M1.7 7.7 V8.1" stroke="#fff" stroke-width="0.9"/><path d="M5.6 0.8 L7 2.2" stroke="#2a8ee3" stroke-width="1.2"/><rect x="3.5" y="4" width="8.8" height="6.6" rx="0.6" fill="#7fbdf3" stroke="#3d9be6" stroke-width="0.9"/></svg>
<div style="position:absolute;left:28.2px;top:64.00px;font-size:9.24px;line-height:1;font-weight:normal;color:#1485d6;white-space:pre;transform:scaleX(0.8143);transform-origin:0 0;">Project Explorer</div>
<svg style="position:absolute;left:91.8px;top:65.3px;" width="6" height="5.5" viewBox="0 0 6 5.5"><path d="M0.3 0.3 L5.7 5.2 M5.7 0.3 L0.3 5.2" stroke="#888" stroke-width="0.7"/></svg>
<svg style="position:absolute;left:114px;top:62.3px;" width="6.5" height="3" viewBox="0 0 6.5 3"><rect x="0.5" y="0.5" width="5.5" height="2" rx="0.8" fill="#e8e8e8" stroke="#777" stroke-width="0.9"/></svg>
<svg style="position:absolute;left:127.3px;top:62.599999999999994px;" width="7" height="6.5" viewBox="0 0 7 6.5"><rect x="0.5" y="0.5" width="6" height="5.6" rx="1" fill="#e8e8e8" stroke="#777" stroke-width="0.9"/><path d="M0.8 1.4 H6.2" stroke="#777" stroke-width="1"/></svg>
<svg style="position:absolute;left:6px;top:80.5px;" width="12" height="11" viewBox="0 0 12 11"><rect x="0.5" y="0.5" width="7.5" height="7.5" fill="#fff" stroke="#777" stroke-width="0.8"/><rect x="3.5" y="3.5" width="8" height="7.5" fill="#fff" stroke="#777" stroke-width="0.8"/><path d="M5.5 7.3 H9.5" stroke="#555" stroke-width="0.8"/></svg>
<svg style="position:absolute;left:20.8px;top:80.8px;" width="11.5" height="11" viewBox="0 0 11.5 11"><path d="M0.6 3 L3.4 0.6 V2 H6.5 L8 3.5 V4.6 H3.4 V5.6 Z" fill="#fff" stroke="#888" stroke-width="0.8" stroke-linejoin="round"/><path d="M10.9 8 L8.1 10.4 V9 H5 L3.5 7.5 V6.4 H8.1 V5.4 Z" fill="#fff" stroke="#888" stroke-width="0.8" stroke-linejoin="round"/></svg>
<svg style="position:absolute;left:40px;top:85px;" width="5.5" height="3" viewBox="0 0 5.5 3"><path d="M0 0 H5.5 L2.75 2.8 Z" fill="#555"/></svg>
<svg style="position:absolute;left:6.800000000000001px;top:99.19999999999999px;" width="6" height="4" viewBox="0 0 6 4"><path d="M0.6 0.6 L2.9 2.9 L5.2 0.6" fill="none" stroke="#333" stroke-width="1.1"/></svg>
<svg style="position:absolute;left:16.5px;top:94.6px;" width="10" height="10" viewBox="0 0 10 10"><rect x="0.5" y="1.5" width="9" height="8" fill="#fff" stroke="#777" stroke-width="0.8"/><rect x="0.5" y="1.5" width="3" height="3" fill="#fff" stroke="#777" stroke-width="0.6"/><circle cx="7" cy="3" r="2.2" fill="#fff" stroke="#777" stroke-width="0.7"/></svg>
<div style="position:absolute;left:29px;top:97.00px;font-size:8.25px;line-height:1;font-weight:normal;color:#0a0a0a;white-space:pre;transform:scaleX(0.8444);transform-origin:0 0;">UIBuilderSingleView</div>
<div style="position:absolute;left:93.5px;top:97.00px;font-size:8.14px;line-height:1;font-weight:normal;color:#b59a5e;white-space:pre;transform:scaleX(0.9672);transform-origin:0 0;">- mobile-4.0</div>
<svg style="position:absolute;left:19.5px;top:109.07px;" width="4" height="6" viewBox="0 0 4 6"><path d="M0.6 0.6 L3 3 L0.6 5.4" fill="none" stroke="#8a8a8a" stroke-width="1"/></svg>
<svg style="position:absolute;left:28px;top:105.16999999999999px;" width="10" height="10" viewBox="0 0 10 10"><rect x="2.5" y="0.5" width="7" height="7.5" fill="#fff" stroke="#777" stroke-width="0.8"/><rect x="0.5" y="2.5" width="6.5" height="7" fill="#fff" stroke="#777" stroke-width="0.8"/><path d="M2 8 V4.5 L4.5 6.5 V4" fill="none" stroke="#555" stroke-width="0.6"/></svg>
<div style="position:absolute;left:40.5px;top:107.00px;font-size:8.25px;line-height:1;font-weight:normal;color:#0a0a0a;white-space:pre;transform:scaleX(0.8297);transform-origin:0 0;">Includes</div>
<svg style="position:absolute;left:19.5px;top:119.64px;" width="4" height="6" viewBox="0 0 4 6"><path d="M0.6 0.6 L3 3 L0.6 5.4" fill="none" stroke="#8a8a8a" stroke-width="1"/></svg>
<svg style="position:absolute;left:28px;top:115.74px;" width="10" height="10" viewBox="0 0 10 10"><path d="M0.5 1.5 H4 L5 2.5 H9.5 V9 H0.5 Z" fill="#fff" stroke="#858585" stroke-width="0.8"/><rect x="0.5" y="2.5" width="9" height="6.5" fill="#eeeeee" stroke="#858585" stroke-width="0.8"/><path d="M6 4.5 H4 V7.5 H6" fill="none" stroke="#666" stroke-width="0.7"/></svg>
<div style="position:absolute;left:40.5px;top:118.00px;font-size:8.25px;line-height:1;font-weight:normal;color:#0a0a0a;white-space:pre;transform:scaleX(0.9956);transform-origin:0 0;">inc</div>
<svg style="position:absolute;left:19.5px;top:130.21px;" width="4" height="6" viewBox="0 0 4 6"><path d="M0.6 0.6 L3 3 L0.6 5.4" fill="none" stroke="#8a8a8a" stroke-width="1"/></svg>
<svg style="position:absolute;left:28px;top:126.31px;" width="10" height="10" viewBox="0 0 10 10"><path d="M0.5 1.5 H4 L5 2.5 H9.5 V9 H0.5 Z" fill="#fff" stroke="#858585" stroke-width="0.8"/><rect x="0.5" y="2.5" width="9" height="6.5" fill="#eeeeee" stroke="#858585" stroke-width="0.8"/><path d="M6 4.5 H4 V7.5 H6" fill="none" stroke="#666" stroke-width="0.7"/></svg>
<div style="position:absolute;left:40.5px;top:128.00px;font-size:8.25px;line-height:1;font-weight:normal;color:#0a0a0a;white-space:pre;transform:scaleX(0.9155);transform-origin:0 0;">res</div>
<svg style="position:absolute;left:19.5px;top:140.78px;" width="4" height="6" viewBox="0 0 4 6"><path d="M0.6 0.6 L3 3 L0.6 5.4" fill="none" stroke="#8a8a8a" stroke-width="1"/></svg>
<svg style="position:absolute;left:28px;top:136.88px;" width="10" height="10" viewBox="0 0 10 10"><path d="M0.5 1.5 H4 L5 2.5 H9.5 V9 H0.5 Z" fill="#fff" stroke="#858585" stroke-width="0.8"/><rect x="0.5" y="2.5" width="9" height="6.5" fill="#eeeeee" stroke="#858585" stroke-width="0.8"/><path d="M6 4.5 H4 V7.5 H6" fill="none" stroke="#666" stroke-width="0.7"/></svg>
<div style="position:absolute;left:40.5px;top:139.00px;font-size:8.25px;line-height:1;font-weight:normal;color:#0a0a0a;white-space:pre;transform:scaleX(0.8124);transform-origin:0 0;">shared</div>
<svg style="position:absolute;left:19.5px;top:151.35px;" width="4" height="6" viewBox="0 0 4 6"><path d="M0.6 0.6 L3 3 L0.6 5.4" fill="none" stroke="#8a8a8a" stroke-width="1"/></svg>
<svg style="position:absolute;left:28px;top:147.45px;" width="10" height="10" viewBox="0 0 10 10"><path d="M0.5 1.5 H4 L5 2.5 H9.5 V9 H0.5 Z" fill="#fff" stroke="#858585" stroke-width="0.8"/><rect x="0.5" y="2.5" width="9" height="6.5" fill="#eeeeee" stroke="#858585" stroke-width="0.8"/><path d="M6 4.5 H4 V7.5 H6" fill="none" stroke="#666" stroke-width="0.7"/></svg>
<div style="position:absolute;left:40.5px;top:149.00px;font-size:8.25px;line-height:1;font-weight:normal;color:#0a0a0a;white-space:pre;transform:scaleX(0.8636);transform-origin:0 0;">src</div>
<svg style="position:absolute;left:18.3px;top:162.61999999999998px;" width="6" height="4" viewBox="0 0 6 4"><path d="M0.6 0.6 L2.9 2.9 L5.2 0.6" fill="none" stroke="#333" stroke-width="1.1"/></svg>
<svg style="position:absolute;left:28px;top:158.01999999999998px;" width="10" height="10" viewBox="0 0 10 10"><path d="M0.5 1.2 H4 L5 2.2 H9.5 V9 H0.5 Z" fill="#fff" stroke="#777" stroke-width="0.8"/><path d="M0.5 3.8 H9.5" stroke="#777" stroke-width="0.8"/></svg>
<div style="position:absolute;left:40.5px;top:160.00px;font-size:8.25px;line-height:1;font-weight:normal;color:#0a0a0a;white-space:pre;transform:scaleX(0.8721);transform-origin:0 0;">layout</div>
<div style="position:absolute;left:38px;top:169px;width:47.50px;height:10.30px;background:#e0e0e0;"></div>
<svg style="position:absolute;left:39px;top:168.59px;" width="10" height="10" viewBox="0 0 10 10"><path d="M0.8 0.5 H6 L8 2.5 V9.5 H0.8 Z" fill="#fff" stroke="#666" stroke-width="0.8"/><path d="M2.8 3.5 L4.3 5.2 L5.8 3.5 M4.3 5.2 V7.8" fill="none" stroke="#333" stroke-width="0.8"/></svg>
<div style="position:absolute;left:51.5px;top:171.00px;font-size:8.25px;line-height:1;font-weight:normal;color:#0a0a0a;white-space:pre;transform:scaleX(0.8885);transform-origin:0 0;">layout.xml</div>
<svg style="position:absolute;left:28px;top:179.16px;" width="10" height="10" viewBox="0 0 10 10"><path d="M0.5 1.2 H4 L5 2.2 H9.5 V9 H0.5 Z" fill="#fff" stroke="#777" stroke-width="0.8"/><path d="M0.5 3.8 H9.5" stroke="#777" stroke-width="0.8"/></svg>
<div style="position:absolute;left:40.5px;top:181.00px;font-size:8.25px;line-height:1;font-weight:normal;color:#0a0a0a;white-space:pre;transform:scaleX(1.0284);transform-origin:0 0;">lib</div>
<svg style="position:absolute;left:28px;top:189.73px;" width="10" height="10" viewBox="0 0 10 10"><path d="M0.5 1.2 H4 L5 2.2 H9.5 V9 H0.5 Z" fill="#fff" stroke="#777" stroke-width="0.8"/><path d="M0.5 3.8 H9.5" stroke="#777" stroke-width="0.8"/></svg>
<div style="position:absolute;left:40.5px;top:192.00px;font-size:8.25px;line-height:1;font-weight:normal;color:#0a0a0a;white-space:pre;transform:scaleX(0.8053);transform-origin:0 0;">SA_Report</div>
<svg style="position:absolute;left:28px;top:200.3px;" width="10" height="10" viewBox="0 0 10 10"><circle cx="4.5" cy="5" r="4.3" fill="#1e2b3a"/><circle cx="4.5" cy="5" r="3.2" fill="#2a93d8"/><path d="M4.5 2.5 L5.3 4.3 L7 4.3 L5.6 5.4 L6.1 7.2 L4.5 6.2 L2.9 7.2 L3.4 5.4 L2 4.3 L3.7 4.3 Z" fill="#fff"/></svg>
<div style="position:absolute;left:40.5px;top:202.00px;font-size:8.25px;line-height:1;font-weight:normal;color:#0a0a0a;white-space:pre;transform:scaleX(0.7852);transform-origin:0 0;">icon.png</div>
<svg style="position:absolute;left:28px;top:210.87px;" width="10" height="10" viewBox="0 0 10 10"><path d="M0.8 0.5 H6 L8.5 3 V9.5 H0.8 Z" fill="#fff" stroke="#777" stroke-width="0.8"/><path d="M2.5 7.5 L4 6 L5.5 7.5" fill="none" stroke="#777" stroke-width="0.6"/></svg>
<div style="position:absolute;left:40.5px;top:213.00px;font-size:8.25px;line-height:1;font-weight:normal;color:#0a0a0a;white-space:pre;transform:scaleX(0.8799);transform-origin:0 0;">tizen-manifest.xml</div>
<svg style="position:absolute;left:12px;top:382px;" width="12" height="10.5" viewBox="0 0 12 10.5"><rect x="0.5" y="0.5" width="3.5" height="3" rx="0.6" fill="#5fb0f0" stroke="#2f93e3" stroke-width="0.6"/><rect x="4.5" y="4" width="3.5" height="2.8" rx="0.6" fill="#fff" stroke="#2f93e3" stroke-width="0.6"/><rect x="0.5" y="7" width="3.5" height="3" rx="0.6" fill="#5fb0f0" stroke="#2f93e3" stroke-width="0.6"/><path d="M4 2 H11 M8 5.4 H10 M4 8.5 H11 M2.2 3.5 V7" stroke="#2f93e3" stroke-width="0.7"/></svg>
<div style="position:absolute;left:28px;top:383.00px;font-size:9.24px;line-height:1;font-weight:normal;color:#1485d6;white-space:pre;transform:scaleX(0.8372);transform-origin:0 0;">Outline</div>
<svg style="position:absolute;left:62px;top:384px;" width="6" height="6" viewBox="0 0 6 6"><path d="M0.3 0.3 L5.7 5.7 M5.7 0.3 L0.3 5.7" stroke="#888" stroke-width="0.7"/></svg>
<svg style="position:absolute;left:113.8px;top:381.8px;" width="6.5" height="3" viewBox="0 0 6.5 3"><rect x="0.5" y="0.5" width="5.5" height="2" rx="0.8" fill="#e8e8e8" stroke="#777" stroke-width="0.9"/></svg>
<svg style="position:absolute;left:127.5px;top:382.1px;" width="7" height="6.5" viewBox="0 0 7 6.5"><rect x="0.5" y="0.5" width="6" height="5.6" rx="1" fill="#e8e8e8" stroke="#777" stroke-width="0.9"/><path d="M0.8 1.4 H6.2" stroke="#777" stroke-width="1"/></svg>
<svg style="position:absolute;left:6px;top:399.5px;" width="11" height="11" viewBox="0 0 11 11"><path d="M0.5 1.5 H7 V10.5 H0.5 Z" fill="#fff" stroke="#777" stroke-width="0.8"/><circle cx="8.2" cy="2.6" r="2.2" fill="#fff" stroke="#777" stroke-width="0.7"/><path d="M8.2 1.5 V3.7 M7.1 2.6 H9.3" stroke="#555" stroke-width="0.5"/></svg>
<div style="position:absolute;left:15.3px;top:414.1px;width:75.30px;height:9.90px;background:#e0e0e0;"></div>
<div style="position:absolute;left:17.5px;top:415px;width:8.00px;height:8.50px;background:#cfcfcf;"></div>
<div style="position:absolute;left:18px;top:415.5px;width:7.00px;height:7.50px;box-sizing:border-box;border:1px solid #888;background:#ddd;"></div>
<div style="position:absolute;left:29px;top:416.00px;font-size:8.14px;line-height:1;font-weight:normal;color:#222;white-space:pre;transform:scaleX(0.8612);transform-origin:0 0;">view1  &lt;View&gt;</div>
<svg style="position:absolute;left:79px;top:416.5px;" width="8" height="6" viewBox="0 0 8 6"><path d="M2.5 1 L0.5 3 L2.5 5" fill="none" stroke="#777" stroke-width="0.8"/><circle cx="5" cy="3" r="1" fill="#777"/></svg>
<svg style="position:absolute;left:168px;top:562px;" width="9" height="8.5" viewBox="0 0 9 8.5"><rect x="0.5" y="0.5" width="8" height="7.5" fill="#eee" stroke="#888" stroke-width="0.8"/><path d="M3 2 V5.8 H6" fill="none" stroke="#555" stroke-width="0.9"/></svg>
<div style="position:absolute;left:180px;top:564.00px;font-size:8.25px;line-height:1;font-weight:normal;color:#444;white-space:pre;transform:scaleX(0.8980);transform-origin:0 0;">document/views/view</div>
<svg style="position:absolute;left:820px;top:62.5px;" width="6.5" height="3" viewBox="0 0 6.5 3"><rect x="0.5" y="0.5" width="5.5" height="2" rx="0.8" fill="#e8e8e8" stroke="#777" stroke-width="0.9"/></svg>
<svg style="position:absolute;left:833.5px;top:62.8px;" width="7" height="6.5" viewBox="0 0 7 6.5"><rect x="0.5" y="0.5" width="6" height="5.6" rx="1" fill="#e8e8e8" stroke="#777" stroke-width="0.9"/><path d="M0.8 1.4 H6.2" stroke="#777" stroke-width="1"/></svg>
<div style="position:absolute;left:157.9px;top:80px;width:21.20px;height:16.00px;box-sizing:border-box;border:1px solid #c4c4c4;background:#dedede;"></div>
<svg style="position:absolute;left:163.5px;top:83px;" width="9.5" height="9.7" viewBox="0 0 9.5 9.7"><rect x="0.5" y="0.5" width="8.5" height="8.7" fill="none" stroke="#a8a8a8" stroke-width="0.9"/><path d="M0.5 2.2 H9" stroke="#a8a8a8" stroke-width="0.7"/><path d="M3.3 4 L2 5.6 L3.3 7.2 M6.2 4 L7.5 5.6 L6.2 7.2" fill="none" stroke="#a8a8a8" stroke-width="0.7"/></svg>
<div style="position:absolute;left:179.1px;top:80px;width:20.90px;height:16.00px;background:#0b86e8;"></div>
<svg style="position:absolute;left:185px;top:83px;" width="9.5" height="9.8" viewBox="0 0 9.5 9.8"><rect x="1.2" y="1.2" width="7.1" height="7.4" fill="none" stroke="#fff" stroke-width="0.9"/><rect x="3.2" y="3.4" width="3.1" height="3" fill="none" stroke="#fff" stroke-width="0.9"/><path d="M0 1.2 H1.2 M8.3 1.2 H9.5 M0 8.6 H1.2 M8.3 8.6 H9.5 M1.2 0 V1.2 M8.3 0 V1.2 M1.2 8.6 V9.8 M8.3 8.6 V9.8" stroke="#fff" stroke-width="0.8"/></svg>
<div style="position:absolute;left:207px;top:81px;width:1.00px;height:14.00px;background:#9a9a9a;"></div>
<svg style="position:absolute;left:218px;top:82px;" width="11" height="11" viewBox="0 0 11 11"><rect x="0.5" y="0.5" width="10" height="10" fill="#fff" stroke="#666" stroke-width="0.9"/><path d="M3 3 L8 8 M8 3 L3 8" stroke="#666" stroke-width="0.7"/><path d="M2 2 H4 L2 4 Z M9 2 V4 L7 2 Z M2 9 V7 L4 9 Z M9 9 H7 L9 7 Z" fill="#555" stroke="#555" stroke-width="0.5"/></svg>
<div style="position:absolute;left:238px;top:86.6px;width:3.00px;height:0.90px;background:#888;"></div>
<div style="position:absolute;left:243px;top:86.6px;width:57.50px;height:0.80px;background:#a9a9a9;"></div>
<svg style="position:absolute;left:301.5px;top:84.5px;" width="5" height="5" viewBox="0 0 5 5"><path d="M2.5 0 V5 M0 2.5 H5" stroke="#888" stroke-width="0.9"/></svg>
<div style="position:absolute;left:256px;top:84px;width:2.30px;height:7.00px;background:#1583e2;"></div>
<div style="position:absolute;left:312px;top:80px;width:24.20px;height:15.30px;box-sizing:border-box;border:1px solid #c9c9c9;background:#fff;"></div>
<div style="position:absolute;left:324.0px;top:83.00px;font-size:8.36px;line-height:1;font-weight:normal;color:#444;white-space:pre;transform:scaleX(0.9158);transform-origin:0 0;">55</div>
<div style="position:absolute;left:338px;top:84.00px;font-size:8.14px;line-height:1;font-weight:normal;color:#aaa;white-space:pre;transform:scaleX(0.8294);transform-origin:0 0;">%</div>
<div style="position:absolute;left:352px;top:81px;width:1.00px;height:14.00px;background:#9a9a9a;"></div>
<div style="position:absolute;left:365.3px;top:80.3px;width:105.00px;height:15.20px;box-sizing:border-box;border:1px solid #c2c2c2;background:#f3f3f3;"></div>
<div style="position:absolute;left:370px;top:84.00px;font-size:8.25px;line-height:1;font-weight:normal;color:#444;white-space:pre;transform:scaleX(0.8823);transform-origin:0 0;">common (portrait_HD)</div>
<svg style="position:absolute;left:459px;top:86.3px;" width="5" height="3.5" viewBox="0 0 5 3.5"><path d="M0 0 H5 L2.5 3.2 Z" fill="#222"/></svg>
<div style="position:absolute;left:469.5px;top:80.3px;width:56.10px;height:15.20px;box-sizing:border-box;border:1px solid #c2c2c2;background:#f3f3f3;"></div>
<div style="position:absolute;left:475px;top:84.00px;font-size:8.25px;line-height:1;font-weight:normal;color:#444;white-space:pre;transform:scaleX(0.8612);transform-origin:0 0;">All locales</div>
<svg style="position:absolute;left:514.5px;top:86.3px;" width="5" height="3.5" viewBox="0 0 5 3.5"><path d="M0 0 H5 L2.5 3.2 Z" fill="#222"/></svg>
<div style="position:absolute;left:533px;top:81px;width:1.00px;height:14.00px;background:#9a9a9a;"></div>
<svg style="position:absolute;left:543.5px;top:82px;" width="10.5" height="10.5" viewBox="0 0 10.5 10.5"><rect x="0.5" y="0.5" width="9.5" height="9.5" rx="2" fill="#ccc" stroke="#888" stroke-width="0.8"/><circle cx="3.3" cy="3.3" r="1.5" fill="#fff" stroke="#777" stroke-width="0.6"/><circle cx="7.2" cy="3.3" r="1.5" fill="#fff" stroke="#777" stroke-width="0.6"/><circle cx="3.3" cy="7.2" r="1.5" fill="#fff" stroke="#777" stroke-width="0.6"/><circle cx="7.2" cy="7.2" r="1.5" fill="#fff" stroke="#777" stroke-width="0.6"/></svg>
<div style="position:absolute;left:564.5px;top:81px;width:1.00px;height:14.00px;background:#9a9a9a;"></div>
<svg style="position:absolute;left:575px;top:82.5px;" width="11" height="11" viewBox="0 0 11 11"><path d="M1 0.5 V10.5" stroke="#a8a8a8" stroke-width="0.8"/><rect x="2" y="2" width="4.5" height="2.6" fill="#eee" stroke="#a8a8a8" stroke-width="0.7"/><rect x="2" y="5.6" width="7.5" height="2.8" fill="#eee" stroke="#a8a8a8" stroke-width="0.7"/><path d="M1 10.5 H3" stroke="#a8a8a8" stroke-width="0.7"/></svg>
<svg style="position:absolute;left:591px;top:82.5px;" width="11" height="11" viewBox="0 0 11 11"><path d="M5 0.5 V10.5" stroke="#a8a8a8" stroke-width="0.7"/><rect x="3" y="1.8" width="4" height="3" rx="1.2" fill="#eee" stroke="#a8a8a8" stroke-width="0.7"/><rect x="1" y="5.8" width="8" height="2.6" fill="#eee" stroke="#a8a8a8" stroke-width="0.7"/></svg>
<svg style="position:absolute;left:606.5px;top:82.5px;" width="11" height="11" viewBox="0 0 11 11"><path d="M10 0.5 V10.5" stroke="#a8a8a8" stroke-width="0.8"/><rect x="4" y="2" width="4.8" height="2.6" fill="#eee" stroke="#a8a8a8" stroke-width="0.7"/><rect x="1" y="5.6" width="7.8" height="2.8" fill="#eee" stroke="#a8a8a8" stroke-width="0.7"/><path d="M1 10 H9" stroke="#a8a8a8" stroke-width="0.6"/></svg>
<div style="position:absolute;left:621px;top:81px;width:1.00px;height:14.00px;background:#9a9a9a;"></div>
<svg style="position:absolute;left:627.5px;top:82.5px;" width="11" height="11" viewBox="0 0 11 11"><path d="M0.5 0.8 H9.5" stroke="#a8a8a8" stroke-width="0.8"/><rect x="1.5" y="2" width="2.8" height="7.5" fill="#eee" stroke="#a8a8a8" stroke-width="0.7"/><rect x="5.5" y="2" width="2.6" height="4.5" fill="#eee" stroke="#a8a8a8" stroke-width="0.7"/></svg>
<svg style="position:absolute;left:644.5px;top:82.5px;" width="11" height="11" viewBox="0 0 11 11"><path d="M0 5.2 H10" stroke="#a8a8a8" stroke-width="0.7"/><rect x="1.8" y="2" width="2.8" height="6.5" fill="#eee" stroke="#a8a8a8" stroke-width="0.7"/><rect x="5.5" y="3" width="2.8" height="4.5" fill="#eee" stroke="#a8a8a8" stroke-width="0.7"/></svg>
<svg style="position:absolute;left:660px;top:82.5px;" width="11" height="11" viewBox="0 0 11 11"><path d="M0.5 9.7 H9.5" stroke="#a8a8a8" stroke-width="0.8"/><rect x="1.5" y="2" width="2.8" height="7" fill="#eee" stroke="#a8a8a8" stroke-width="0.7"/><rect x="5.5" y="4.3" width="2.6" height="4.7" fill="#eee" stroke="#a8a8a8" stroke-width="0.7"/></svg>
<div style="position:absolute;left:674.5px;top:81px;width:1.00px;height:14.00px;background:#9a9a9a;"></div>
<svg style="position:absolute;left:680px;top:82.5px;" width="11" height="11" viewBox="0 0 11 11"><path d="M5 0.5 V11" stroke="#a8a8a8" stroke-width="0.7"/><rect x="3" y="1.8" width="4" height="2.8" rx="1.2" fill="#eee" stroke="#a8a8a8" stroke-width="0.7"/><rect x="1" y="5.3" width="8" height="3" fill="#eee" stroke="#a8a8a8" stroke-width="0.7"/></svg>
<div style="position:absolute;left:695.8px;top:84px;width:1.20px;height:8.00px;background:#dadada;"></div>
<svg style="position:absolute;left:561px;top:105px;" width="5" height="3.5" viewBox="0 0 5 3.5"><path d="M0.5 3 L2.5 0.8 L4.5 3" fill="none" stroke="#333" stroke-width="0.9"/></svg>
<svg style="position:absolute;left:561px;top:538px;" width="5" height="3.5" viewBox="0 0 5 3.5"><path d="M0.5 0.5 L2.5 2.7 L4.5 0.5" fill="none" stroke="#333" stroke-width="0.9"/></svg>
<svg style="position:absolute;left:551.5px;top:547px;" width="3.5" height="4.5" viewBox="0 0 3.5 4.5"><path d="M0.5 0.5 L2.8 2.25 L0.5 4" fill="none" stroke="#333" stroke-width="0.9"/></svg>
<svg style="position:absolute;left:145.5px;top:547px;" width="3.5" height="4.5" viewBox="0 0 3.5 4.5"><path d="M3 0.5 L0.7 2.25 L3 4" fill="none" stroke="#333" stroke-width="0.9"/></svg>
<svg style="position:absolute;left:151px;top:63px;" width="9" height="10.5" viewBox="0 0 9 10.5"><path d="M0.7 0.5 H6 L8.3 2.8 V10 H0.7 Z" fill="#fff" stroke="#666" stroke-width="0.9"/><path d="M2.8 3.8 L4.4 5.6 L6 3.8 M4.4 5.6 V8.4" fill="none" stroke="#222" stroke-width="0.9"/></svg>
<svg style="position:absolute;left:706px;top:63px;" width="12.5" height="9.5" viewBox="0 0 12.5 9.5"><rect x="0.5" y="0.5" width="11.5" height="8.5" fill="#cfe6fb" stroke="#2d93e6" stroke-width="0.9"/><path d="M0.5 3.2 H12 M0.5 6 H12 M3 0.5 V9" stroke="#2d93e6" stroke-width="0.8"/></svg>
<svg style="position:absolute;left:733px;top:62px;" width="12" height="12" viewBox="0 0 12 12"><rect x="0.5" y="0.5" width="8" height="9" rx="1" fill="#fff" stroke="#666" stroke-width="0.9"/><path d="M2 2.5 H6 M2 4.5 H5" stroke="#666" stroke-width="0.7"/><circle cx="7.5" cy="7.5" r="2.6" fill="#999" stroke="#555" stroke-width="0.8"/><path d="M9.3 9.3 L11.5 11.5" stroke="#444" stroke-width="1.1"/></svg>
<div style="position:absolute;left:752px;top:62px;width:1.00px;height:11.00px;background:#c0c0c0;"></div>
<svg style="position:absolute;left:760px;top:63px;" width="10.5" height="9.5" viewBox="0 0 10.5 9.5"><path d="M2.4 7.1 L8.1 2.4" stroke="#6a6a6a" stroke-width="4.6" stroke-linecap="round"/><path d="M2.6 6.2 L5.2 4 M5.4 5.6 L8 3.4" stroke="#b5b5b5" stroke-width="0.7" stroke-linecap="round"/></svg>
<div style="position:absolute;left:776.5px;top:62px;width:1.00px;height:11.00px;background:#c0c0c0;"></div>
<div style="position:absolute;left:781.8px;top:61.00px;font-size:7.7px;line-height:1;font-weight:normal;color:#333;white-space:pre;transform:scaleX(1.1679);transform-origin:0 0;">»</div>
<div style="position:absolute;left:786.6px;top:65.00px;font-size:6.82px;line-height:1;font-weight:normal;color:#333;white-space:pre;transform:scaleX(0.7901);transform-origin:0 0;">1</div>
<svg style="position:absolute;left:702px;top:82px;" width="11" height="10" viewBox="0 0 11 10"><path d="M6 0.8 L10 4.8 L8.8 5.2 L6.8 7.2 L6.8 9 L1.8 4 L3.6 4 L5.6 2 Z" fill="#fff" stroke="#777" stroke-width="0.8"/><path d="M3.8 6.2 L0.8 9.2" stroke="#777" stroke-width="0.9"/></svg>
<svg style="position:absolute;left:720.5px;top:85px;" width="5" height="2.8" viewBox="0 0 5 2.8"><path d="M0 0 H5 L2.5 2.6 Z" fill="#555"/></svg>
<svg style="position:absolute;left:707.5px;top:100px;" width="9.5" height="9.5" viewBox="0 0 9.5 9.5"><rect x="0.5" y="0.5" width="8.5" height="8.5" fill="#fff" stroke="#999" stroke-width="0.6"/><rect x="1.8" y="1.8" width="6" height="6" fill="#ddd" stroke="#888" stroke-width="0.7"/><path d="M3.5 2 V7.6 M6 2 V7.6" stroke="#999" stroke-width="0.5"/></svg>
<div style="position:absolute;left:721px;top:101.00px;font-size:8.58px;line-height:1;font-weight:normal;color:#333;white-space:pre;transform:scaleX(0.8671);transform-origin:0 0;">View</div>
<div style="position:absolute;left:709px;top:126.00px;font-size:8.36px;line-height:1;font-weight:bold;color:#111;white-space:pre;transform:scaleX(0.8628);transform-origin:0 0;">Attributes</div>
<svg style="position:absolute;left:715px;top:143px;" width="5.5" height="3" viewBox="0 0 5.5 3"><path d="M0 0 H5.5 L2.75 2.8 Z" fill="#222"/></svg>
<div style="position:absolute;left:724px;top:141.00px;font-size:8.25px;line-height:1;font-weight:normal;color:#444;white-space:pre;transform:scaleX(0.8175);transform-origin:0 0;">General</div>
<div style="position:absolute;left:725px;top:160.00px;font-size:8.25px;line-height:1;font-weight:normal;color:#333;white-space:pre;transform:scaleX(0.9697);transform-origin:0 0;">ID</div>
<div style="position:absolute;left:760px;top:155.6px;width:84.50px;height:15.00px;box-sizing:border-box;border:1px solid #c8c8c8;background:#fff;"></div>
<div style="position:absolute;left:763px;top:160.00px;font-size:8.14px;line-height:1;font-weight:normal;color:#888;white-space:pre;transform:scaleX(0.8662);transform-origin:0 0;">view1</div>
<div style="position:absolute;left:725px;top:178.00px;font-size:8.25px;line-height:1;font-weight:normal;color:#333;white-space:pre;transform:scaleX(0.8978);transform-origin:0 0;">type</div>
<div style="position:absolute;left:760px;top:173.7px;width:84.50px;height:14.10px;box-sizing:border-box;border:1px solid #cdcdcd;background:#efefef;"></div>
<div style="position:absolute;left:763px;top:178.00px;font-size:8.14px;line-height:1;font-weight:normal;color:#aaa;white-space:pre;transform:scaleX(0.9222);transform-origin:0 0;">view</div>
<div style="position:absolute;left:725px;top:197.00px;font-size:8.25px;line-height:1;font-weight:normal;color:#333;white-space:pre;transform:scaleX(0.8845);transform-origin:0 0;">Indicator</div>
<svg style="position:absolute;left:760px;top:197.5px;" width="9" height="9" viewBox="0 0 9 9"><circle cx="4.5" cy="4.5" r="3.9" fill="#fff" stroke="#8a8a8a" stroke-width="0.7"/><circle cx="4.5" cy="4.5" r="2.3" fill="#1f8ae3"/></svg>
<div style="position:absolute;left:772px;top:197.00px;font-size:8.36px;line-height:1;font-weight:normal;color:#444;white-space:pre;transform:scaleX(0.8686);transform-origin:0 0;">true</div>
<svg style="position:absolute;left:795.5px;top:197.5px;" width="9" height="9" viewBox="0 0 9 9"><circle cx="4.5" cy="4.5" r="3.9" fill="#fff" stroke="#8a8a8a" stroke-width="0.7"/></svg>
<div style="position:absolute;left:808px;top:197.00px;font-size:8.36px;line-height:1;font-weight:normal;color:#555;white-space:pre;transform:scaleX(0.7943);transform-origin:0 0;">false</div>
<div style="position:absolute;left:725px;top:218.00px;font-size:8.25px;line-height:1;font-weight:normal;color:#222;white-space:pre;transform:scaleX(0.8670);transform-origin:0 0;">Orientati...</div>
<div style="position:absolute;left:760px;top:212.7px;width:84.50px;height:15.80px;box-sizing:border-box;border:1px solid #c8c8c8;background:#efefef;"></div>
<div style="position:absolute;left:765px;top:217.00px;font-size:8.25px;line-height:1;font-weight:normal;color:#333;white-space:pre;transform:scaleX(0.8269);transform-origin:0 0;">full_sensor</div>
<svg style="position:absolute;left:834.5px;top:218.5px;" width="5" height="3.5" viewBox="0 0 5 3.5"><path d="M0 0 H5 L2.5 3.2 Z" fill="#222"/></svg>
<div style="position:absolute;left:698.5px;top:233.5px;width:148.50px;height:1.00px;background:#d0d0d0;"></div>
<div style="position:absolute;left:709px;top:244.00px;font-size:8.36px;line-height:1;font-weight:bold;color:#111;white-space:pre;transform:scaleX(0.7854);transform-origin:0 0;">Events</div>
<div style="position:absolute;left:724px;top:260px;width:102.50px;height:14.30px;box-sizing:border-box;border:1px solid #c8c8c8;background:#f7f7f7;"></div>
<div style="position:absolute;left:727px;top:262.00px;font-size:8.36px;line-height:1;font-weight:normal;color:#555;white-space:pre;transform:scaleX(0.8514);transform-origin:0 0;">uib,view,create</div>
<div style="position:absolute;left:724px;top:277.5px;width:102.50px;height:14.20px;box-sizing:border-box;border:1px solid #c8c8c8;background:#f7f7f7;"></div>
<div style="position:absolute;left:727px;top:279.00px;font-size:8.36px;line-height:1;font-weight:normal;color:#555;white-space:pre;transform:scaleX(0.8253);transform-origin:0 0;">uib,view,destroy</div>
<svg style="position:absolute;left:832px;top:262px;" width="13.5" height="13.5" viewBox="0 0 13.5 13.5"><circle cx="6.75" cy="6.75" r="6.6" fill="#9a9a9a"/><path d="M6.75 3 V10.5 M3 6.75 H10.5" stroke="#eee" stroke-width="1.1"/></svg>
<svg style="position:absolute;left:832px;top:279px;" width="13.5" height="13.5" viewBox="0 0 13.5 13.5"><circle cx="6.75" cy="6.75" r="6.6" fill="#9a9a9a"/><path d="M6.75 3 V10.5 M3 6.75 H10.5" stroke="#eee" stroke-width="1.1"/></svg>
<svg style="position:absolute;left:702.5px;top:547px;" width="3.5" height="4.5" viewBox="0 0 3.5 4.5"><path d="M3 0.5 L0.7 2.25 L3 4" fill="none" stroke="#333" stroke-width="0.9"/></svg>
<svg style="position:absolute;left:838.5px;top:547px;" width="3.5" height="4.5" viewBox="0 0 3.5 4.5"><path d="M0.5 0.5 L2.8 2.25 L0.5 4" fill="none" stroke="#333" stroke-width="0.9"/></svg>
<svg style="position:absolute;left:9px;top:39.3px;" width="14" height="12.5" viewBox="0 0 14 12.5"><rect x="0.5" y="0.5" width="11.5" height="10" fill="#fff" stroke="#6e6e6e" stroke-width="0.9"/><path d="M0.5 2.8 H12" stroke="#6e6e6e" stroke-width="0.8"/><rect x="1" y="1" width="10.5" height="1.6" fill="#ddd"/><circle cx="9.8" cy="8.3" r="3.6" fill="#e6e6e6" stroke="#6e6e6e" stroke-width="0.9"/><path d="M9.8 6.3 V10.3 M7.8 8.3 H11.8" stroke="#555" stroke-width="0.9"/></svg>
<svg style="position:absolute;left:27.5px;top:44.1px;" width="4.6" height="2.6" viewBox="0 0 4.6 2.6"><path d="M0 0 H4.6 L2.3 2.5 Z" fill="#222"/></svg>
<svg style="position:absolute;left:37.7px;top:38.9px;" width="12.5" height="12" viewBox="0 0 12.5 12"><rect x="3.5" y="0.5" width="8.5" height="8" fill="#f3f3f3" stroke="#bdbdbd" stroke-width="0.9"/><rect x="0.5" y="3.5" width="8.5" height="8" fill="#f3f3f3" stroke="#bdbdbd" stroke-width="0.9"/><rect x="2.5" y="3.5" width="4.5" height="2.5" fill="none" stroke="#bdbdbd" stroke-width="0.8"/><rect x="2.5" y="8" width="4.5" height="3.5" fill="none" stroke="#bdbdbd" stroke-width="0.8"/></svg>
<div style="position:absolute;left:55px;top:37px;width:1.00px;height:15.50px;background:#a0a0a0;"></div>
<svg style="position:absolute;left:62.4px;top:38.4px;" width="11.5" height="13" viewBox="0 0 11.5 13"><path d="M0.5 0.5 H8 L11 3.5 V12.5 H0.5 Z" fill="#f5f5f5" stroke="#6e6e6e" stroke-width="0.9"/><path d="M0.5 3.5 H11 M2.5 7 H9 V11 H2.5 Z M4.6 7 V11 M6.8 7 V11" fill="none" stroke="#6e6e6e" stroke-width="0.7"/></svg>
<svg style="position:absolute;left:83.9px;top:38.5px;" width="14" height="12.5" viewBox="0 0 14 12.5"><circle cx="7" cy="6.5" r="4.6" fill="#cfcfcf" stroke="#6e6e6e" stroke-width="0.8"/><path d="M4 3.5 L10 9.5" stroke="#555" stroke-width="0.9"/><path d="M2.4 6.5 H0.3 M11.6 6.5 H13.7 M3.5 2.8 L1.8 1 M10.5 2.8 L12.2 1 M3.5 10.2 L1.8 12 M10.5 10.2 L12.2 12 M7 1.9 V0" stroke="#6e6e6e" stroke-width="0.8"/></svg>
<svg style="position:absolute;left:102.6px;top:43.8px;" width="4.6" height="2.6" viewBox="0 0 4.6 2.6"><path d="M0 0 H4.6 L2.3 2.5 Z" fill="#222"/></svg>
<svg style="position:absolute;left:113px;top:38.5px;" width="13" height="13" viewBox="0 0 13 13"><circle cx="6.5" cy="6.5" r="6" fill="#fff" stroke="#6e6e6e" stroke-width="0.9"/><path d="M5 4 L8.6 6.5 L5 9 Z" fill="none" stroke="#6e6e6e" stroke-width="0.8"/></svg>
<svg style="position:absolute;left:130.8px;top:43.8px;" width="4.6" height="2.6" viewBox="0 0 4.6 2.6"><path d="M0 0 H4.6 L2.3 2.5 Z" fill="#222"/></svg>
<svg style="position:absolute;left:140.8px;top:38px;" width="14" height="14" viewBox="0 0 14 14"><circle cx="4.2" cy="4" r="3.5" fill="#fff" stroke="#6e6e6e" stroke-width="0.8"/><path d="M3.4 2.4 L5.5 4 L3.4 5.6 Z" fill="#6e6e6e"/><circle cx="4.8" cy="10" r="3" fill="#f3f3f3" stroke="#6e6e6e" stroke-width="0.9"/><path d="M3.6 10.8 L5.6 8.9" stroke="#6e6e6e" stroke-width="0.8"/><path d="M9.3 8.2 H13.2 M9.3 10.8 H13.2" stroke="#8a8a8a" stroke-width="0.7"/></svg>
<svg style="position:absolute;left:159.2px;top:43.8px;" width="4.6" height="2.6" viewBox="0 0 4.6 2.6"><path d="M0 0 H4.6 L2.3 2.5 Z" fill="#222"/></svg>
<svg style="position:absolute;left:171.8px;top:38.5px;" width="13" height="13" viewBox="0 0 13 13"><circle cx="6.5" cy="6.5" r="6" fill="#fafafa" stroke="#c0c0c0" stroke-width="0.9"/><rect x="4.8" y="4.8" width="3.4" height="3.4" fill="none" stroke="#aaa" stroke-width="0.8"/></svg>
<div style="position:absolute;left:191.2px;top:38.5px;width:102.80px;height:12.70px;box-sizing:border-box;border:1px solid #bcbcbc;background:#fff;"></div>
<div style="position:absolute;left:282.5px;top:39.5px;width:10.50px;height:10.70px;background:#dcdcdc;"></div>
<svg style="position:absolute;left:285.5px;top:43.5px;" width="5" height="3.5" viewBox="0 0 5 3.5"><path d="M0 0 H5 L2.5 3.2 Z" fill="#222"/></svg>
<div style="position:absolute;left:194px;top:41.00px;font-size:8.36px;line-height:1;font-weight:normal;color:#111;white-space:pre;transform:scaleX(0.9030);transform-origin:0 0;">No target</div>
<svg style="position:absolute;left:300px;top:39.6px;" width="13" height="11.5" viewBox="0 0 13 11.5"><circle cx="1.8" cy="1.6" r="1.2" fill="none" stroke="#6e6e6e" stroke-width="0.7"/><circle cx="1.8" cy="5.7" r="1.2" fill="none" stroke="#6e6e6e" stroke-width="0.7"/><circle cx="1.8" cy="9.8" r="1.2" fill="none" stroke="#6e6e6e" stroke-width="0.7"/><path d="M3.5 1.6 H13 M3.5 5.7 H13 M3.5 9.8 H13" stroke="#6e6e6e" stroke-width="1.3"/></svg>
<svg style="position:absolute;left:319.7px;top:39px;" width="13.5" height="12.5" viewBox="0 0 13.5 12.5"><circle cx="5.8" cy="5.8" r="5.2" fill="#eee" stroke="#6e6e6e" stroke-width="0.9"/><path d="M1.5 6 L3.3 6 L4.5 3.5 L6 8 L7.3 4.5 L8.5 6.5 L10 6" fill="none" stroke="#555" stroke-width="0.7"/><path d="M9.5 9.5 L12.8 12.2" stroke="#555" stroke-width="1.1"/></svg>
<svg style="position:absolute;left:339.4px;top:39.6px;" width="12.5" height="11.5" viewBox="0 0 12.5 11.5"><rect x="0.5" y="0.5" width="11.5" height="2.5" fill="#ddd" stroke="#6e6e6e" stroke-width="0.8"/><rect x="1.3" y="3" width="10" height="8" fill="#fff" stroke="#6e6e6e" stroke-width="0.8"/><path d="M5 5.3 H7.5" stroke="#555" stroke-width="0.9"/></svg>
<svg style="position:absolute;left:359.8px;top:37.8px;" width="10.5" height="13.5" viewBox="0 0 10.5 13.5"><circle cx="5.25" cy="5" r="4.6" fill="#fff" stroke="#6e6e6e" stroke-width="0.8"/><circle cx="5.25" cy="5" r="2" fill="#ddd" stroke="#6e6e6e" stroke-width="0.7"/><path d="M3 9 L3 13 L5.25 11.5 L7.5 13 L7.5 9" fill="none" stroke="#6e6e6e" stroke-width="0.8"/></svg>
<svg style="position:absolute;left:377.7px;top:39px;" width="14.5" height="12.5" viewBox="0 0 14.5 12.5"><rect x="0.5" y="0.5" width="11.5" height="9.5" fill="#fff" stroke="#6e6e6e" stroke-width="0.9"/><rect x="1" y="1" width="10.5" height="2" fill="#ccc"/><path d="M2.5 5.5 H5 M2.5 7.5 H4.5" stroke="#888" stroke-width="0.7"/><circle cx="9.5" cy="8" r="2.6" fill="#fff" stroke="#6e6e6e" stroke-width="0.9"/><path d="M11.3 9.8 L13.8 12.2" stroke="#555" stroke-width="1.1"/></svg>
<svg style="position:absolute;left:400px;top:39.5px;" width="14" height="12" viewBox="0 0 14 12"><path d="M0.6 0 V11.5" stroke="#bbb" stroke-width="0.9"/><path d="M2 5.5 L6.5 1 V3.5 H13 V7.5 H6.5 V10 Z" fill="#fafafa" stroke="#bbb" stroke-width="0.9" stroke-linejoin="round"/></svg>
<svg style="position:absolute;left:421.5px;top:40px;" width="12" height="10.5" viewBox="0 0 12 10.5"><path d="M0.5 5.2 L5.5 0.5 V3.2 H11.5 V7.2 H5.5 V10 Z" fill="#fafafa" stroke="#bbb" stroke-width="0.9" stroke-linejoin="round"/></svg>
<svg style="position:absolute;left:438.5px;top:44px;" width="4.6" height="2.6" viewBox="0 0 4.6 2.6"><path d="M0 0 H4.6 L2.3 2.5 Z" fill="#222"/></svg>
<svg style="position:absolute;left:449px;top:40px;" width="12" height="10.5" viewBox="0 0 12 10.5"><path d="M11.5 5.2 L6.5 0.5 V3.2 H0.5 V7.2 H6.5 V10 Z" fill="#fafafa" stroke="#bbb" stroke-width="0.9" stroke-linejoin="round"/></svg>
<svg style="position:absolute;left:467px;top:44px;" width="4.6" height="2.6" viewBox="0 0 4.6 2.6"><path d="M0 0 H4.6 L2.3 2.5 Z" fill="#222"/></svg>
<div style="position:absolute;left:551.3px;top:36.7px;width:162.10px;height:15.30px;box-sizing:border-box;border:1px solid #b5b5b5;background:#fff;"></div>
<div style="position:absolute;left:555px;top:42.00px;font-size:8.25px;line-height:1;font-weight:normal;color:#555;white-space:pre;transform:scaleX(0.8278);transform-origin:0 0;">Quick Access</div>
<svg style="position:absolute;left:728px;top:38.9px;" width="14" height="14" viewBox="0 0 14 14"><rect x="0.5" y="0.5" width="11" height="11.5" fill="#f5f5f5" stroke="#6e6e6e" stroke-width="0.9"/><path d="M0.5 3 H11.5 M3 3 V12" stroke="#6e6e6e" stroke-width="0.7"/><circle cx="10" cy="10.5" r="3" fill="#fff" stroke="#6e6e6e" stroke-width="0.8"/><path d="M10 8.8 V12.2 M8.3 10.5 H11.7" stroke="#555" stroke-width="0.7"/></svg>
<div style="position:absolute;left:745.2px;top:37px;width:1.00px;height:16.00px;background:#b0b0b0;"></div>
<svg style="position:absolute;left:752.1px;top:39.3px;" width="12.5" height="12.5" viewBox="0 0 12.5 12.5"><rect x="0.5" y="0.5" width="11.5" height="11.5" fill="#f8f8f8" stroke="#6e6e6e" stroke-width="0.9"/><path d="M0.5 2.8 H12 M2.8 2.8 V12" stroke="#6e6e6e" stroke-width="0.7"/><text x="7.6" y="10" font-size="6.5" text-anchor="middle" fill="#555" font-family="Liberation Sans">W</text></svg>
<div style="position:absolute;left:768.5px;top:41.00px;font-size:8.58px;line-height:1;font-weight:normal;color:#222;white-space:pre;transform:scaleX(0.8293);transform-origin:0 0;">Web</div>
<div style="position:absolute;left:787px;top:36.3px;width:55.30px;height:18.30px;box-sizing:border-box;border:1px solid #a9d2f3;background:#cce4f7;"></div>
<svg style="position:absolute;left:791.1px;top:40px;" width="12.5" height="12" viewBox="0 0 12.5 12"><rect x="0.5" y="0.5" width="11.5" height="11" fill="#fafafa" stroke="#6e6e6e" stroke-width="0.9"/><path d="M0.5 2.6 H12 M2.6 2.6 V11.5" stroke="#6e6e6e" stroke-width="0.7"/><text x="7.3" y="9.8" font-size="5.8" text-anchor="middle" fill="#888" font-family="Liberation Sans">UI</text></svg>
<div style="position:absolute;left:807.2px;top:41.00px;font-size:8.58px;line-height:1;font-weight:normal;color:#222;white-space:pre;transform:scaleX(0.8229);transform-origin:0 0;">UI Builder</div>
<svg style="position:absolute;left:0px;top:0px;pointer-events:none;" width="850" height="582" viewBox="0 0 850 582"><rect x="2.4" y="57" width="138.6" height="167.5" fill="none" stroke="#e8232b" stroke-width="1.8"/></svg>
</body></html>
